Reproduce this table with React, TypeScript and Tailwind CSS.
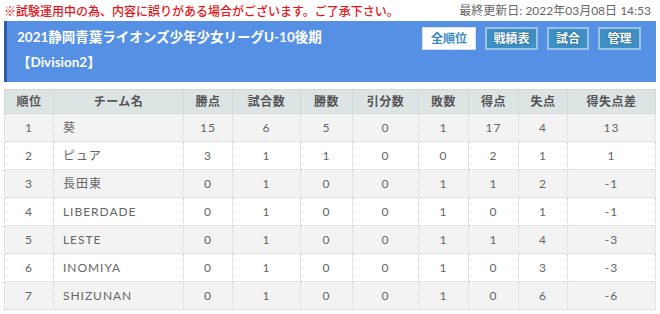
const teams = [
  { rank: 1, name: "葵", pts: 15, games: 6, win: 5, draw: 0, lose: 1, gf: 17, ga: 4, diff: "13" },
  { rank: 2, name: "ピュア", pts: 3, games: 1, win: 1, draw: 0, lose: 0, gf: 2, ga: 1, diff: "1" },
  { rank: 3, name: "長田東", pts: 0, games: 1, win: 0, draw: 0, lose: 1, gf: 1, ga: 2, diff: "-1" },
  { rank: 4, name: "LIBERDADE", pts: 0, games: 1, win: 0, draw: 0, lose: 1, gf: 0, ga: 1, diff: "-1" },
  { rank: 5, name: "LESTE", pts: 0, games: 1, win: 0, draw: 0, lose: 1, gf: 1, ga: 4, diff: "-3" },
  { rank: 6, name: "INOMIYA", pts: 0, games: 1, win: 0, draw: 0, lose: 1, gf: 0, ga: 3, diff: "-3" },
  { rank: 7, name: "SHIZUNAN", pts: 0, games: 1, win: 0, draw: 0, lose: 1, gf: 0, ga: 6, diff: "-6" },
];

const cols = ["順位", "チーム名", "勝点", "試合数", "勝数", "引分数", "敗数", "得点", "失点", "得失点差"];
const widths = ["w-[49px]", "w-[130px]", "w-[49px]", "w-[68px]", "w-[52px]", "w-[66px]", "w-[50px]", "w-[50px]", "w-[49px]", "w-[88px]"];

function NavButton({ label, width, active }: { label: string; width: string; active?: boolean }) {
  return (
    <button
      className={
        active
          ? `${width} h-[23px] border border-[#d6e4f2] bg-white text-[12px] font-bold text-[#3b8ac4]`
          : `${width} h-[23px] border-2 border-[#9cc3e3] bg-[#3d8fc4] text-[12px] font-bold text-white [text-shadow:0_0_2px_#1d4f78]`
      }
    >
      {label}
    </button>
  );
}

const cell = "border border-dotted border-[#d6d6d6] text-center";

export default function App() {
  return (
    <div className="h-[314px] w-[660px] overflow-hidden bg-white font-['Lato','Noto_Sans_CJK_JP',sans-serif] text-[#555]">
      <div className="flex h-[21px] items-center justify-between pl-[4px] pr-[9px] text-[12px]">
        <span className="font-['Noto_Sans_CJK_JP',sans-serif] font-medium text-[#e8141a]">
          ※試験運用中の為、内容に誤りがある場合がございます。ご了承下さい。
        </span>
        <span className="text-[#666]">最終更新日: 2022年03月08日 14:53</span>
      </div>

      <div className="mx-[4px] flex h-[61px] border-l-[3px] border-[#2f5ea8] bg-[#5590e4] pl-[10px] pr-[15px]">
        <div className="flex flex-1 flex-col pt-[6px] font-bold text-white">
          <div className="text-[13.5px] leading-[20px]">2021静岡青葉ライオンズ少年少女リーグU-10後期</div>
          <div className="mt-[5px] text-[13.5px] leading-[20px]">【Division2】</div>
        </div>
        <div className="flex gap-[9px] pt-[6px]">
          <NavButton label="全順位" width="w-[54px]" active />
          <NavButton label="戦績表" width="w-[53px]" />
          <NavButton label="試合" width="w-[42px]" />
          <NavButton label="管理" width="w-[43px]" />
        </div>
      </div>

      <table className="mx-[4px] mt-[7px] w-[651px] table-fixed border-collapse text-[12px]">
        <thead>
          <tr className="h-[24px] bg-[#dde4e4]">
            {cols.map((c, i) => (
              <th key={c} className={`${widths[i]} border border-[#d3d9d9] font-bold tracking-[0.04em] text-[#555]`}>
                {c}
              </th>
            ))}
          </tr>
        </thead>
        <tbody className="font-normal tracking-[0.08em] text-[#666]">
          {teams.map((t, idx) => (
            <tr key={t.rank} className={idx % 2 === 0 ? "h-[28px] bg-[#f3f3f3]" : "h-[28px] bg-white"}>
              <td className={cell}>{t.rank}</td>
              <td className="border border-dotted border-[#d6d6d6] pl-[9px] text-left">{t.name}</td>
              <td className={cell}>{t.pts}</td>
              <td className={cell}>{t.games}</td>
              <td className={cell}>{t.win}</td>
              <td className={cell}>{t.draw}</td>
              <td className={cell}>{t.lose}</td>
              <td className={cell}>{t.gf}</td>
              <td className={cell}>{t.ga}</td>
              <td className={cell}>{t.diff}</td>
            </tr>
          ))}
        </tbody>
      </table>
    </div>
  );
}
